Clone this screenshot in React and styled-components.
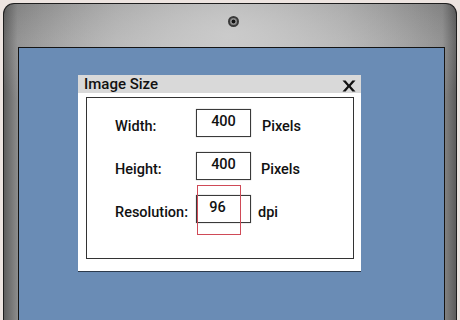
import React from 'react';
import styled, { createGlobalStyle } from 'styled-components';

const Global = createGlobalStyle`
  html, body { margin: 0; padding: 0; }
  body { background: #ede4e0; font-family: Roboto, 'Liberation Sans', sans-serif; }
`;

const Page = styled.div`
  width: 460px;
  height: 320px;
  overflow: hidden;
  padding: 3px 3px 0 3px;
  box-sizing: border-box;
  background: #ede4e0;
`;

const Laptop = styled.div`
  height: 317px;
  box-sizing: border-box;
  border: 1px solid #1e1e1e;
  border-bottom: none;
  border-radius: 11px 11px 0 0;
  background:
    radial-gradient(ellipse 55% 40% at 50% 10%, rgba(205, 205, 205, 0.9) 0%, rgba(200, 200, 200, 0) 100%),
    linear-gradient(180deg, rgba(0, 0, 0, 0.12) 0%, rgba(0, 0, 0, 0) 12%),
    linear-gradient(90deg, #5e5e5e 0%, #8c8c8c 3%, #a8a8a8 25%, #b8b8b8 50%, #a6a6a6 75%, #8a8a8a 97%, #5c5c5c 100%);
  padding: 0 11px 0 14px;
  display: flex;
  flex-direction: column;
`;

const CameraRow = styled.div`
  height: 43px;
  display: flex;
  justify-content: center;
  align-items: flex-start;
  padding-top: 12px;
  padding-left: 4px;
  box-sizing: border-box;
`;

const Camera = styled.div`
  width: 11px;
  height: 11px;
  border-radius: 50%;
  box-sizing: border-box;
  border: 2px solid #3a3a3a;
  background: radial-gradient(circle, #111 0 1.6px, #8a8a8a 2.2px);
`;

const Screen = styled.div`
  flex: 1;
  background: #6a8cb5;
  border: 1px solid #151515;
  border-bottom: none;
  padding: 27px 0 0 59px;
`;

const Dialog = styled.div`
  width: 283px;
  height: 196px;
  background: #fff;
  box-shadow: 0 1px 0 #2c3a4c;
  display: flex;
  flex-direction: column;
`;

const TitleBar = styled.div`
  height: 18px;
  background: #d9d9d9;
  display: flex;
  align-items: center;
  justify-content: space-between;
  padding: 0 5px 0 6px;
  font-size: 15px;
  font-weight: 500;
  color: #111;
  line-height: 18px;
`;

const Close = styled.svg`
  display: block;
  margin-top: 3px;
`;

const Body = styled.div`
  flex: 1;
  padding: 4px 7px 12px 8px;
  display: flex;
`;

const Panel = styled.div`
  flex: 1;
  border: 1px solid #333;
  padding: 11px 0 0 28px;
  display: grid;
  grid-template-columns: 81px 55px auto;
  grid-auto-rows: 28px;
  row-gap: 15px;
  align-items: center;
  align-content: start;
`;

const Label = styled.div`
  font-size: 14.5px;
  font-weight: 500;
  color: #111;
  padding-top: 7px;
`;

const Field = styled.div`
  position: relative;
  height: 28px;
  box-sizing: border-box;
  border: 1px solid #3a3a3a;
  box-shadow: 0 0 1px rgba(0, 0, 0, 0.4);
  display: flex;
  align-items: center;
  justify-content: center;
  padding-right: ${p => p.$offset || 0}px;
  padding-bottom: 3px;
  font-size: 14.5px;
  font-weight: 500;
  color: #111;
`;

const Unit = styled.div`
  font-size: 14.5px;
  font-weight: 500;
  color: #111;
  padding-left: ${p => p.$gap}px;
  padding-top: 7px;
`;

const Highlight = styled.div`
  position: absolute;
  left: 0;
  top: -11px;
  width: 44px;
  height: 50px;
  box-sizing: border-box;
  border: 1px solid #cf4a57;
`;

const rows = [
  { label: 'Width:', value: '400', unit: 'Pixels', gap: 11 },
  { label: 'Height:', value: '400', unit: 'Pixels', gap: 10 },
  { label: 'Resolution:', value: '96', unit: 'dpi', gap: 7, offset: 12, mark: true },
];

export default function App() {
  return (
    <>
      <Global />
      <Page>
        <Laptop>
          <CameraRow>
            <Camera />
          </CameraRow>
          <Screen>
            <Dialog>
              <TitleBar>
                <span>Image Size</span>
                <Close width="14" height="12" viewBox="0 0 14 12">
                  <path d="M0.5 0.5 H3.6 L7 4.4 L10.4 0.5 H13.5 L8.6 6 L13.5 11.5 H10.4 L7 7.6 L3.6 11.5 H0.5 L5.4 6 Z" fill="#111" />
                </Close>
              </TitleBar>
              <Body>
                <Panel>
                  {rows.map(r => (
                    <React.Fragment key={r.label}>
                      <Label>{r.label}</Label>
                      <Field $offset={r.offset}>
                        {r.value}
                        {r.mark && <Highlight />}
                      </Field>
                      <Unit $gap={r.gap}>{r.unit}</Unit>
                    </React.Fragment>
                  ))}
                </Panel>
              </Body>
            </Dialog>
          </Screen>
        </Laptop>
      </Page>
    </>
  );
}
